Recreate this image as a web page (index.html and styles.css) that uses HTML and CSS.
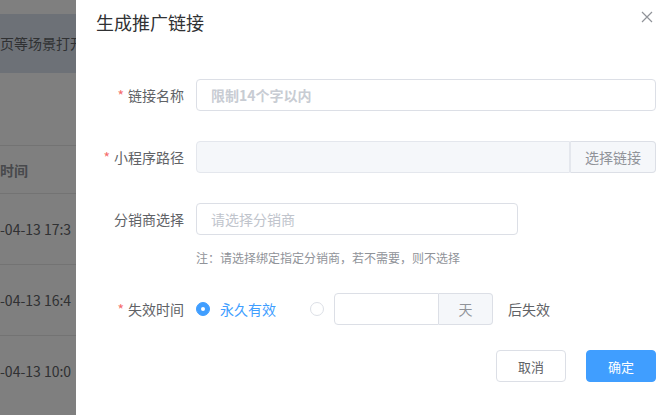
FILE: index.html
```html
<!DOCTYPE html>
<html lang="zh-CN">
<head>
<meta charset="utf-8">
<title>生成推广链接</title>
<link rel="stylesheet" href="styles.css">
</head>
<body>
<div class="page">
  <div class="notice">页等场景打开</div>
  <div class="table">
    <div class="row head">时间</div>
    <div class="row">-04-13 17:3</div>
    <div class="row">-04-13 16:4</div>
    <div class="row">-04-13 10:0</div>
  </div>
</div>

<div class="mask"></div>

<div class="dialog">
  <div class="dialog-header">
    <span class="dialog-title">生成推广链接</span>
    <button class="dialog-close" aria-label="关闭">
      <svg width="12" height="12" viewBox="0 0 12 12"><path d="M1 1 L11 11 M11 1 L1 11" stroke="#909399" stroke-width="1.2" fill="none"/></svg>
    </button>
  </div>
  <div class="dialog-body">
    <div class="form-item">
      <label class="form-label"><span class="req">*</span>链接名称</label>
      <div class="form-content">
        <div class="input"><span class="placeholder strong">限制14个字以内</span></div>
      </div>
    </div>
    <div class="form-item">
      <label class="form-label"><span class="req">*</span>小程序路径</label>
      <div class="form-content">
        <div class="input-group">
          <div class="input disabled"></div>
          <div class="append link">选择链接</div>
        </div>
      </div>
    </div>
    <div class="form-item note-item">
      <label class="form-label">分销商选择</label>
      <div class="form-content col">
        <div class="input narrow"><span class="placeholder">请选择分销商</span></div>
        <div class="note">注：请选择绑定指定分销商，若不需要，则不选择</div>
      </div>
    </div>
    <div class="form-item">
      <label class="form-label"><span class="req">*</span>失效时间</label>
      <div class="form-content row-flex">
        <span class="radio checked"><span class="radio-inner"></span><span class="radio-label">永久有效</span></span>
        <span class="radio"><span class="radio-inner"></span></span>
        <div class="input-group days">
          <div class="input"></div>
          <div class="append">天</div>
        </div>
        <span class="after">后失效</span>
      </div>
    </div>
    <div class="footer">
      <button class="btn">取消</button>
      <button class="btn primary">确定</button>
    </div>
  </div>
</div>
</body>
</html>
```

FILE: styles.css
```css
* { box-sizing: border-box; }
html, body { margin: 0; padding: 0; }
body {
  font-family: "Noto Sans CJK SC", "Open Sans", sans-serif;
  font-size: 14px;
  color: #606266;
  background: #fff;
  width: 672px;
  height: 415px;
  overflow: hidden;
}

.page { padding-top: 14px; }
.notice {
  height: 59px;
  line-height: 59px;
  background: #dbe2ee;
  color: #606266;
  font-size: 14px;
  white-space: nowrap;
}
.table { margin-top: 72px; }
.row {
  border-top: 1px solid #e6e6e6;
  height: 71px;
  line-height: 71px;
  font-size: 14px;
  color: #606266;
  white-space: nowrap;
}
.row.head {
  height: 48px;
  line-height: 48px;
  font-weight: bold;
  color: #909399;
}

.mask {
  position: fixed;
  inset: 0;
  background: rgba(0, 0, 0, 0.5);
}

.dialog {
  position: fixed;
  left: 76px;
  top: -10px;
  width: 600px;
  height: 450px;
  background: #fff;
}
.dialog-header {
  padding: 20px 20px 10px;
  position: relative;
}
.dialog-title {
  font-size: 18px;
  line-height: 24px;
  color: #303133;
  display: block;
}
.dialog-close {
  position: absolute;
  top: 21px;
  right: 23px;
  width: 12px;
  height: 12px;
  padding: 0;
  border: 0;
  background: none;
  display: flex;
}
.dialog-body { padding: 35px 20px 0; }

.form-item {
  display: flex;
  margin-bottom: 30px;
}
.form-item.note-item { margin-bottom: 25px; }
.form-label {
  width: 100px;
  flex: none;
  text-align: right;
  padding-right: 12px;
  line-height: 32px;
  font-size: 14px;
  color: #606266;
}
.req { color: #f56c6c; margin-right: 4px; }
.form-content { flex: 1; min-width: 0; }
.form-content.col { display: flex; flex-direction: column; }
.form-content.row-flex { display: flex; align-items: center; height: 32px; }

.input {
  height: 32px;
  border: 1px solid #dcdfe6;
  border-radius: 4px;
  padding: 0 14px;
  line-height: 30px;
  background: #fff;
  font-size: 14px;
}
.input.narrow { width: 322px; }
.input.disabled { background: #f5f7fa; border-color: #e4e7ed; }
.placeholder { color: #c0c4cc; }
.placeholder.strong { font-weight: bold; color: #c8ccd3; }

.input-group { display: flex; }
.input-group .input {
  flex: 1;
  border-top-right-radius: 0;
  border-bottom-right-radius: 0;
}
.append {
  flex: none;
  height: 32px;
  line-height: 30px;
  border: 1px solid #dcdfe6;
  border-left: 0;
  border-radius: 0 4px 4px 0;
  background: #f5f7fa;
  color: #909399;
  text-align: center;
  font-size: 14px;
}
.append.link { width: 86px; border-left: 1px solid #e4e7ed; }
.input-group.days { width: 159px; margin-left: 10px; }
.input-group.days .append { width: 54px; }

.note {
  margin-top: 13px;
  line-height: 20px;
  font-size: 12px;
  color: #909399;
}

.radio { display: inline-flex; align-items: center; }
.radio-inner {
  width: 14px;
  height: 14px;
  border-radius: 50%;
  border: 1px solid #dcdfe6;
  background: #fff;
  position: relative;
}
.radio.checked .radio-inner { background: #409eff; border-color: #409eff; }
.radio.checked .radio-inner::after {
  content: "";
  position: absolute;
  left: 4px;
  top: 4px;
  width: 4px;
  height: 4px;
  border-radius: 50%;
  background: #fff;
}
.radio-label {
  padding-left: 10px;
  color: #409eff;
  font-size: 14px;
}
.radio + .radio { margin-left: 34px; }
.after { margin-left: 15px; color: #606266; }

.footer {
  display: flex;
  justify-content: flex-end;
  gap: 20px;
  margin-top: -5px;
}
.btn {
  width: 70px;
  height: 32px;
  border: 1px solid #dcdfe6;
  border-radius: 4px;
  background: #fff;
  color: #606266;
  font-family: inherit;
  font-size: 13px;
  padding: 0;
}
.btn.primary { background: #409eff; border-color: #409eff; color: #fff; }
```
